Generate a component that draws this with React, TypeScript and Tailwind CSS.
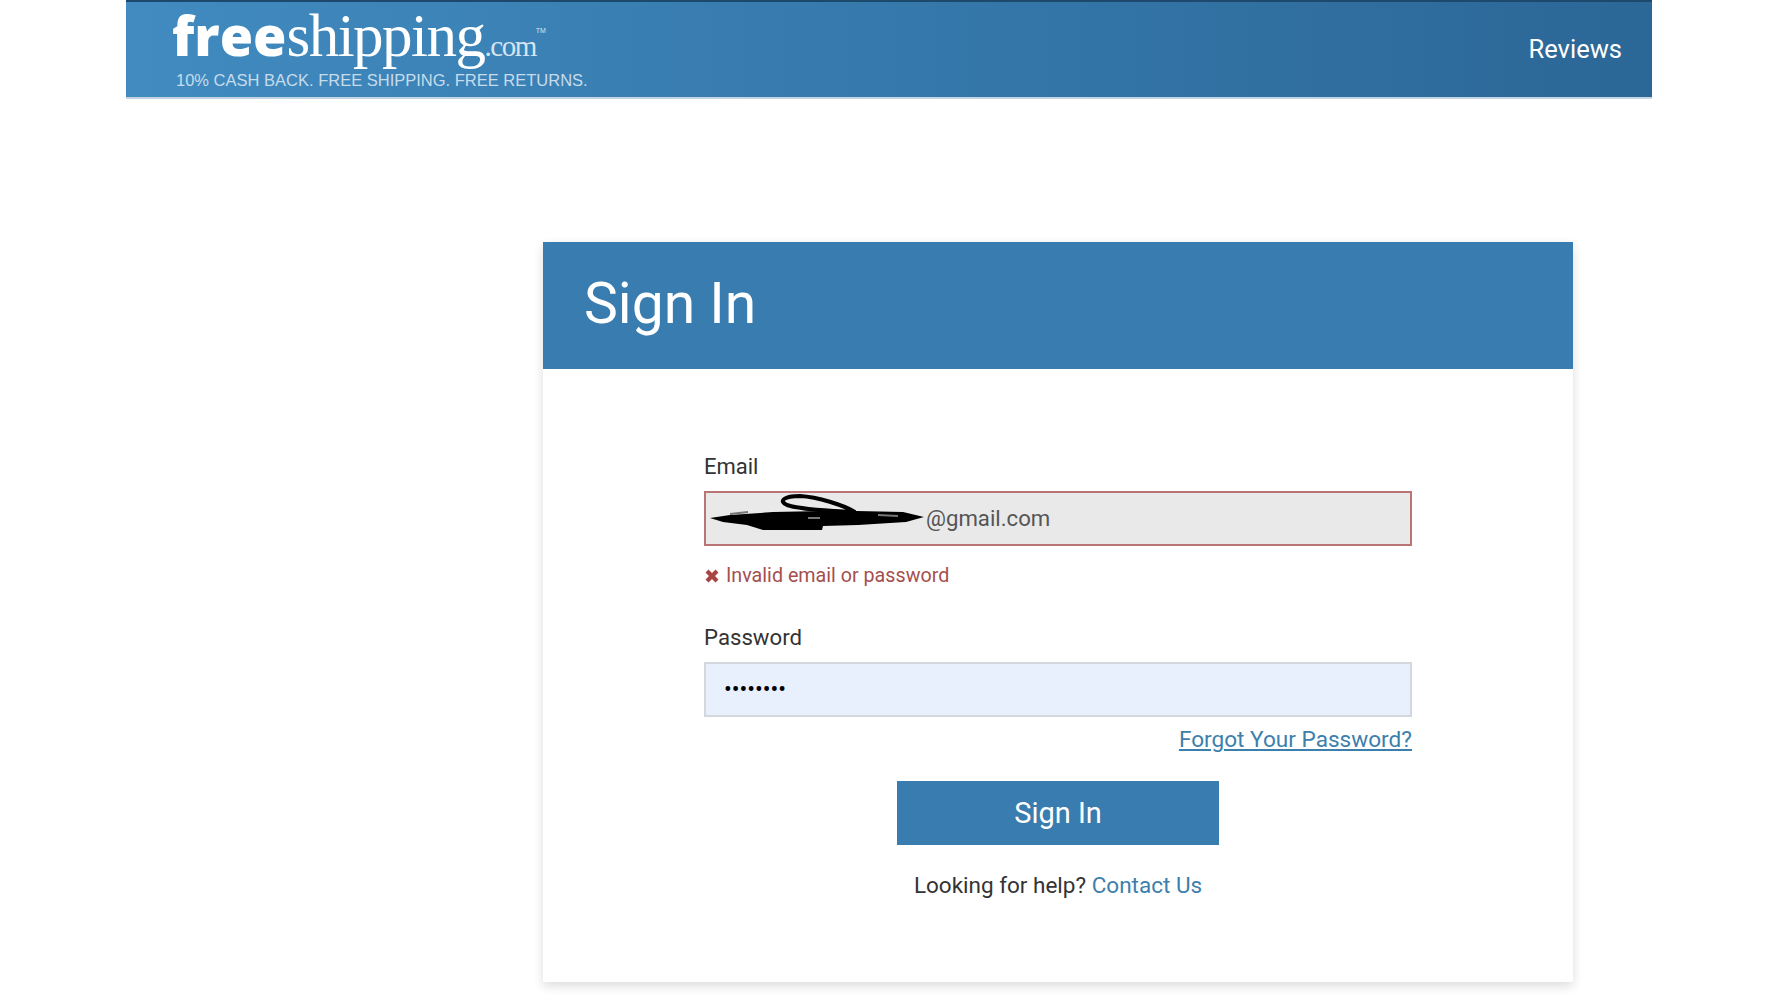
import React from 'react';

const Logo = () => (
  <div className="flex flex-col -ml-[2px] -mt-[6px]">
    <div className="flex items-baseline text-white leading-none">
      <span className="font-['Open_Sans',sans-serif] font-extrabold text-[54px]">free</span>
      <span className="font-['Liberation_Serif',serif] text-[61px] tracking-[-1.5px]">shipping</span>
      <span className="font-['Liberation_Serif',serif] text-[29px] tracking-[-1.5px] text-[#d5e4f0]">.com</span>
      <span className="font-['Liberation_Sans',sans-serif] text-[7px] text-[#d5e4f0] self-start mt-[22px]">TM</span>
    </div>
    <div className="mt-[5px] ml-[4px] font-['Liberation_Sans',sans-serif] text-[16.5px] leading-[18px] text-[#c6dcec] whitespace-nowrap">
      10% CASH BACK. FREE SHIPPING. FREE RETURNS.
    </div>
  </div>
);

// the black pen scribble over the email address
const Scribble = () => (
  <svg className="absolute left-[2px] top-0 pointer-events-none" width="230" height="53" viewBox="0 0 230 53" fill="none">
    <path d="M2 25 L22 22 L65 19 L115 18 L149 18 L195 19 L216 24 L198 29 L150 32 L115 33 L114 37 L55 37 L39 32 L15 29 Z" fill="#000" />
    <path d="M79 12 C70 8 76 3 92 3 C110 4 135 12 147 19 C130 18 98 18 79 12 Z" stroke="#000" strokeWidth="4" />
    <path d="M22 21 L40 19 M100 25 L112 25 M170 22 L190 23" stroke="#777" strokeWidth="2" />
  </svg>
);

const App = () => {
  return (
    <div className="min-h-[1000px] bg-white font-['Roboto',sans-serif]">
      <header className="ml-[126px] w-[1526px] h-[99px] flex items-center justify-between pl-[48px] pr-[30px] bg-gradient-to-r from-[#418bc0] to-[#2b6797] border-b-2 border-[#c3d4e3] border-t-2 border-t-[#1d4a6c]">
        <Logo />
        <a className="text-[25.5px] text-white">Reviews</a>
      </header>

      <main className="ml-[543px] mt-[143px] w-[1030px] h-[740px] bg-white shadow-[0_4px_10px_rgba(0,0,0,0.14)]">
        <div className="h-[127px] flex items-center pl-[41px] pb-[4px] bg-[#397cb0]">
          <h1 className="text-[57px] font-normal text-white">Sign In</h1>
        </div>

        <form className="mx-[161px] pt-[83px]">
          <label className="block text-[22px] leading-[30px] text-[#333]">Email</label>
          <div className="relative mt-[9px] h-[55px] flex items-center pl-[20px] bg-[#e9e9e9] border-2 border-[#b97575] text-[22.2px] text-[#555]">
            <span className="ml-[200px]">@gmail.com</span>
            <Scribble />
          </div>
          <div className="flex items-center gap-[6px] mt-[16px] text-[19.7px] leading-[28px] text-[#a54f4f]">
            <svg width="16" height="16" viewBox="0 0 16 16">
              <path d="M1.5 4.5 L4.5 1.5 L8 5 L11.5 1.5 L14.5 4.5 L11 8 L14.5 11.5 L11.5 14.5 L8 11 L4.5 14.5 L1.5 11.5 L5 8 Z" fill="#a94442" />
            </svg>
            <span>Invalid email or password</span>
          </div>

          <label className="block mt-[32px] text-[22.2px] leading-[30px] text-[#333]">Password</label>
          <div className="mt-[10px] h-[55px] flex items-center pl-[18px] bg-[#e8f0fe] border-2 border-[#d4d7dc] text-[23px] text-black leading-none">
            ••••••••
          </div>
          <div className="flex justify-end mt-[8px]">
            <a className="text-[22.6px] leading-[30px] text-[#3d7fac] underline">Forgot Your Password?</a>
          </div>
          <div className="flex justify-center mt-[26px]">
            <button type="button" className="w-[322px] h-[64px] pt-[2px] bg-[#397cb0] text-white text-[29px]">Sign In</button>
          </div>
          <p className="mt-[25px] text-center text-[22.5px] leading-[30px] text-[#333]">
            Looking for help? <a className="text-[#3d7fac]">Contact Us</a>
          </p>
        </form>
      </main>
    </div>
  );
};

export default App;
